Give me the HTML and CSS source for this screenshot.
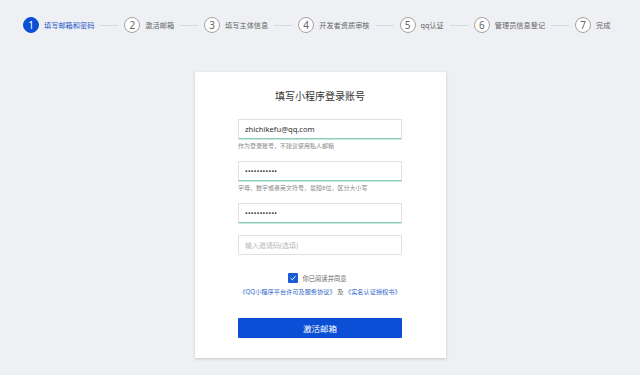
FILE: index.html
```html
<!DOCTYPE html>
<html lang="zh">
<head>
<meta charset="utf-8">
<link rel="stylesheet" href="styles.css">
</head>
<body>
<div class="steps">
  <div class="step active"><span class="num">1</span><span class="label">填写邮箱和密码</span></div>
  <span class="line"></span>
  <div class="step"><span class="num">2</span><span class="label">激活邮箱</span></div>
  <span class="line"></span>
  <div class="step"><span class="num">3</span><span class="label">填写主体信息</span></div>
  <span class="line"></span>
  <div class="step"><span class="num">4</span><span class="label">开发者资质审核</span></div>
  <span class="line"></span>
  <div class="step"><span class="num">5</span><span class="label">qq认证</span></div>
  <span class="line"></span>
  <div class="step"><span class="num">6</span><span class="label">管理员信息登记</span></div>
  <span class="line"></span>
  <div class="step"><span class="num">7</span><span class="label">完成</span></div>
</div>

<div class="card">
  <h1 class="title">填写小程序登录账号</h1>
  <form class="form">
    <input class="field ok first" type="text" value="zhichikefu@qq.com">
    <p class="hint">作为登录账号，不建议使用私人邮箱</p>
    <input class="field ok next" type="password" value="abcdefghijk">
    <p class="hint">字母、数字或者英文符号，最短8位，区分大小写</p>
    <input class="field ok next" type="password" value="abcdefghijk">
    <input class="field plain invite" type="text" placeholder="输入邀请码(选填)">
    <div class="agree">
      <span class="check"><svg viewBox="0 0 10 10" width="8" height="8"><path d="M2 5.2 L4.2 7.3 L8 2.8" fill="none" stroke="#fff" stroke-width="1.2"/></svg></span>
      <span class="agree-text">你已阅读并同意</span>
    </div>
    <p class="links"><a>《QQ小程序平台许可及服务协议》</a> 及 <a>《实名认证授权书》</a></p>
    <button class="btn" type="button">激活邮箱</button>
  </form>
</div>
</body>
</html>
```
FILE: styles.css
```css
html, body {
  margin: 0;
  padding: 0;
}
body {
  background: #eef0f4;
  font-family: "Noto Sans", "Noto Sans CJK SC", sans-serif;
  color: #333;
  width: 640px;
  height: 375px;
  overflow: hidden;
}
.steps {
  display: flex;
  align-items: center;
  padding: 17px 0 0 23px;
  height: 16px;
}
.step {
  display: flex;
  align-items: center;
}
.num {
  width: 14px;
  height: 14px;
  border: 1px solid #a3a3a3;
  border-radius: 50%;
  display: flex;
  align-items: center;
  justify-content: center;
  font-size: 10px;
  line-height: 1;
  color: #666;
  background: #fff;
}
.label {
  margin-left: 5px;
  font-size: 7.2px;
  color: #666;
  white-space: nowrap;
}
.step.active .num {
  background: #0a4fd6;
  border-color: #0a4fd6;
  color: #fff;
}
.step.active .label {
  color: #1f56c9;
}
.line {
  width: 18px;
  height: 1px;
  background: #d6d9df;
  margin: 0 6px;
}
.card {
  width: 251px;
  margin: 39px auto 0;
  background: #fff;
  box-shadow: 0 1px 3px rgba(0, 0, 0, 0.18);
  padding: 17px 0 20px;
  box-sizing: border-box;
  height: 286px;
}
.title {
  margin: 0;
  text-align: center;
  font-size: 10px;
  line-height: 14px;
  font-weight: normal;
  color: #333;
}
.form {
  width: 164px;
  margin: 16px auto 0;
  display: flex;
  flex-direction: column;
}
.field {
  box-sizing: border-box;
  width: 164px;
  height: 20px;
  margin: 0;
  padding: 0 6px;
  font-family: inherit;
  font-size: 7.6px;
  color: #333;
  border: 1px solid #e0e0e0;
  border-radius: 1px;
  outline: none;
  background: #fff;
}
.field.ok {
  border-bottom: 1px solid #8ccfb3;
  box-shadow: 0 1px 0 #c7e8da;
}
.field[type="password"] {
  font-size: 7px;
  letter-spacing: 0.3px;
}
.field::placeholder {
  color: #b8b8b8;
  font-size: 7px;
}
.next {
  margin-top: 10px;
}
.invite {
  margin-top: 12px;
}
.hint {
  margin: 2px 0 0;
  font-size: 6px;
  line-height: 10px;
  color: #888;
  white-space: nowrap;
}
.agree {
  margin-top: 18px;
  display: flex;
  align-items: center;
  justify-content: center;
  height: 10px;
  padding-right: 5px;
}
.check {
  width: 10px;
  height: 10px;
  background: #1a5cd8;
  border-radius: 1px;
  display: flex;
  align-items: center;
  justify-content: center;
}
.agree-text {
  margin-left: 4px;
  font-size: 6.3px;
  color: #666;
}
.links {
  margin: 4px 0 0;
  text-align: center;
  font-size: 6.2px;
  line-height: 10px;
  color: #555;
  white-space: nowrap;
}
.links a {
  color: #2c66c9;
}
.btn {
  margin-top: 21px;
  height: 20px;
  width: 164px;
  border: none;
  border-radius: 1px;
  background: #0a4fd6;
  color: #fff;
  font-family: inherit;
  font-size: 8.5px;
  padding: 0;
}
```
